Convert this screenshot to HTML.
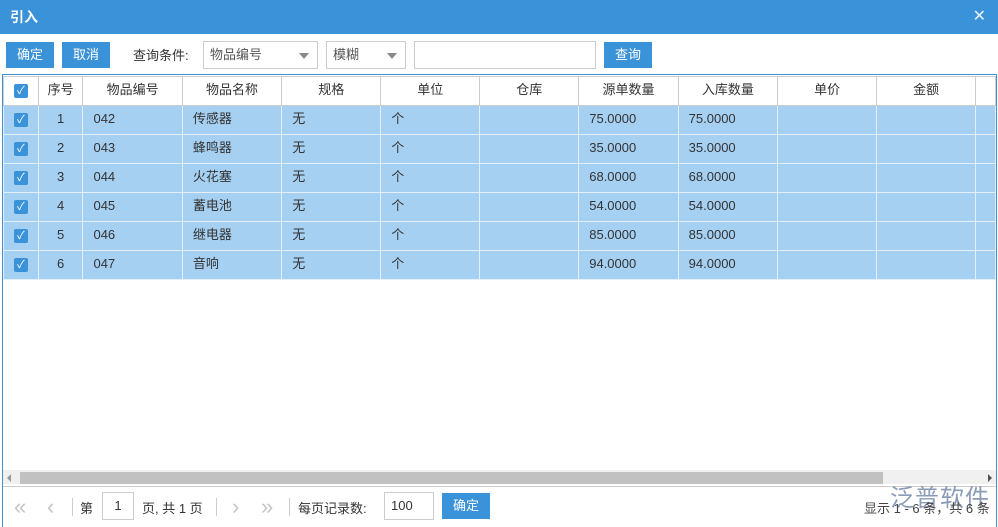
<!DOCTYPE html><html><head><meta charset="utf-8"><style>
*{margin:0;padding:0;box-sizing:border-box}
body{width:998px;height:527px;background:#fff;font-family:"Liberation Sans","Noto Sans CJK SC",sans-serif;font-size:13px;color:#333;position:relative;overflow:hidden}
.a{position:absolute}
.title{left:0;top:0;width:998px;height:34px;background:#3a92d8;color:#fff;font-weight:bold;font-size:14px;line-height:34px;padding-left:10px}
.btn{background:#3a92d8;color:#fff;text-align:center;line-height:26px;height:26px}
.sel{border:1px solid #ccc;height:28px;line-height:26px;padding-left:6px;color:#555}
.tri{position:absolute;right:8px;top:11px;border-left:5px solid transparent;border-right:5px solid transparent;border-top:6px solid #888}
.grid{left:2px;top:74px;width:995px;height:438px;border:1px solid #3a92d8;border-bottom:none}
table{border-collapse:collapse;position:absolute;left:0;top:1px;table-layout:fixed}
td{border:1px solid #ccc;height:29px;white-space:nowrap;overflow:hidden;line-height:26px;vertical-align:top}
tr.h td{background:#fff;text-align:center;height:29px;line-height:26px}
tr.r td{background:#a6d0f2;border-color:#e6eef6}
.cb{display:inline-block;width:14px;height:14px;background:#3a92d8;border-radius:2px;color:#fff;font-size:11px;line-height:14px;text-align:center;vertical-align:middle}
.pl{padding-left:10px}
.ar{position:absolute;top:496px;color:#c4c4c4;font-size:22px;line-height:22px}
</style></head><body>
<div class="a title">引入<span style="position:absolute;right:12px;top:0;font-weight:normal;font-size:16px;color:#e8f2fb">✕</span></div>
<div class="a btn" style="left:6px;top:42px;width:48px">确定</div>
<div class="a btn" style="left:62px;top:42px;width:48px">取消</div>
<div class="a" style="left:133px;top:45px">查询条件:</div>
<div class="a sel" style="left:203px;top:41px;width:115px">物品编号<span class="tri"></span></div>
<div class="a sel" style="left:326px;top:41px;width:80px">模糊<span class="tri"></span></div>
<div class="a sel" style="left:414px;top:41px;width:182px"></div>
<div class="a btn" style="left:604px;top:42px;width:48px">查询</div>
<div class="a grid">
<table>
<colgroup><col style="width:35px"><col style="width:45px"><col style="width:100px"><col style="width:100px"><col style="width:100px"><col style="width:100px"><col style="width:100px"><col style="width:100px"><col style="width:100px"><col style="width:100px"><col style="width:100px"><col style="width:20px"></colgroup>
<tr class="h"><td><span class="cb">✓</span></td><td>序号</td><td>物品编号</td><td>物品名称</td><td>规格</td><td>单位</td><td>仓库</td><td>源单数量</td><td>入库数量</td><td>单价</td><td>金额</td><td></td></tr>
<tr class="r"><td style="text-align:center"><span class="cb">✓</span></td><td style="text-align:center">1</td><td class="pl">042</td><td class="pl">传感器</td><td class="pl">无</td><td class="pl">个</td><td></td><td class="pl">75.0000</td><td class="pl">75.0000</td><td></td><td></td><td></td></tr>
<tr class="r"><td style="text-align:center"><span class="cb">✓</span></td><td style="text-align:center">2</td><td class="pl">043</td><td class="pl">蜂鸣器</td><td class="pl">无</td><td class="pl">个</td><td></td><td class="pl">35.0000</td><td class="pl">35.0000</td><td></td><td></td><td></td></tr>
<tr class="r"><td style="text-align:center"><span class="cb">✓</span></td><td style="text-align:center">3</td><td class="pl">044</td><td class="pl">火花塞</td><td class="pl">无</td><td class="pl">个</td><td></td><td class="pl">68.0000</td><td class="pl">68.0000</td><td></td><td></td><td></td></tr>
<tr class="r"><td style="text-align:center"><span class="cb">✓</span></td><td style="text-align:center">4</td><td class="pl">045</td><td class="pl">蓄电池</td><td class="pl">无</td><td class="pl">个</td><td></td><td class="pl">54.0000</td><td class="pl">54.0000</td><td></td><td></td><td></td></tr>
<tr class="r"><td style="text-align:center"><span class="cb">✓</span></td><td style="text-align:center">5</td><td class="pl">046</td><td class="pl">继电器</td><td class="pl">无</td><td class="pl">个</td><td></td><td class="pl">85.0000</td><td class="pl">85.0000</td><td></td><td></td><td></td></tr>
<tr class="r"><td style="text-align:center"><span class="cb">✓</span></td><td style="text-align:center">6</td><td class="pl">047</td><td class="pl">音响</td><td class="pl">无</td><td class="pl">个</td><td></td><td class="pl">94.0000</td><td class="pl">94.0000</td><td></td><td></td><td></td></tr>
</table>
<div class="a" style="left:0;top:395px;width:993px;height:14px;background:#f0f0f0"></div>
<div class="a" style="left:17px;top:397px;width:863px;height:12px;background:#c1c1c1"></div>
<div class="a" style="left:4px;top:399px;border-top:4px solid transparent;border-bottom:4px solid transparent;border-right:4px solid #999"></div>
<div class="a" style="left:985px;top:399px;border-top:4px solid transparent;border-bottom:4px solid transparent;border-left:4px solid #555"></div>
<div class="a" style="left:0;top:411px;width:993px;height:1px;background:#ccc"></div>
</div>
<div class="a" style="left:2px;top:512px;width:995px;height:15px;border-left:1px solid #3a92d8;border-right:1px solid #3a92d8"></div>
<span class="ar" style="left:14px">«</span><span class="ar" style="left:47px">‹</span>
<span class="a" style="left:72px;top:498px;width:1px;height:18px;background:#ccc"></span>
<span class="ar" style="left:232px">›</span><span class="ar" style="left:261px">»</span>
<span class="a" style="left:216px;top:498px;width:1px;height:18px;background:#ccc"></span>
<span class="a" style="left:289px;top:498px;width:1px;height:18px;background:#ccc"></span>
<div class="a" style="left:80px;top:498px">第</div>
<div class="a sel" style="left:102px;top:492px;width:32px;text-align:center;padding:0;color:#333">1</div>
<div class="a" style="left:142px;top:498px">页, 共 1 页</div>
<div class="a" style="left:298px;top:498px">每页记录数:</div>
<div class="a sel" style="left:384px;top:492px;width:50px;color:#333">100</div>
<div class="a btn" style="left:442px;top:493px;width:48px">确定</div>
<div class="a" style="left:890px;top:478px;font-size:24px;color:#8a9bb8;letter-spacing:1px">泛普软件</div>
<div class="a" style="left:864px;top:498px;color:#444">显示 1 - 6 条，共 6 条</div>
</body></html>
